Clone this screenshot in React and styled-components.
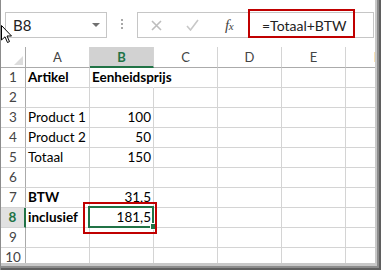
import React from 'react';
import styled, { createGlobalStyle, css } from 'styled-components';

const Global = createGlobalStyle`
  html, body { margin: 0; padding: 0; background: #fff; }
  body { font-family: Lato, "Liberation Sans", sans-serif; }
`;

const Frame = styled.div`
  position: relative;
  width: 381px;
  height: 270px;
  box-sizing: border-box;
  border-left: 1px solid #8c8c8c;
  background: #fff;
  overflow: hidden;
  box-shadow: inset -2px -2px 0 #5f5f5f, inset -4px -4px 0 #8c8c8c, inset -6px -7px 0 #c8c8c8;
`;

const Inner = styled.div`
  width: 374px;
  height: 263px;
  overflow: hidden;
  display: flex;
  flex-direction: column;
  background: #fff;
`;

const FormulaBar = styled.div`
  height: 47px;
  flex: none;
  box-sizing: border-box;
  display: flex;
  align-items: flex-start;
  padding: 12px 0 0 4px;
`;

const NameBox = styled.div`
  width: 102px;
  height: 26px;
  box-sizing: border-box;
  border: 1px solid #c6c6c6;
  display: flex;
  align-items: center;
  justify-content: space-between;
  padding: 0 6px 0 7px;
  font-size: 15px;
  color: #222;
`;

const Caret = styled.span`
  width: 0;
  height: 0;
  border-left: 4px solid transparent;
  border-right: 4px solid transparent;
  border-top: 4px solid #707070;
`;

const Dots = styled.div`
  margin: 7px 0 0 14px;
  display: flex;
  flex-direction: column;
  gap: 2px;
  width: 2px;
`;

const Dot = styled.span`
  width: 2px;
  height: 2px;
  background: #a8a8a8;
`;

const FxBox = styled.div`
  margin-left: 14px;
  width: 237px;
  height: 26px;
  box-sizing: border-box;
  border: 1px solid #c6c6c6;
  display: flex;
  align-items: stretch;
`;

const Slot = styled.div`
  width: ${p => p.$w}px;
  flex: none;
  display: flex;
  align-items: center;
  justify-content: center;
`;

const FxText = styled.span`
  font-family: "Liberation Serif", serif;
  font-style: italic;
  font-size: 15px;
  color: #444;
  letter-spacing: -0.5px;
  & small { font-size: 11px; }
`;

const Field = styled.div`
  position: relative;
  flex: 1;
  display: flex;
  align-items: center;
  padding-left: 14px;
  font-size: 14px;
  color: #222;
`;

const Annotation = styled.span`
  position: absolute;
  box-sizing: border-box;
  border: 2px solid #c00000;
  pointer-events: none;
  z-index: 3;
`;

const FieldMark = styled(Annotation)`
  top: -4px;
  left: 0;
  width: 107px;
  height: 29px;
`;

const Sheet = styled.div`
  display: grid;
  grid-template-columns: 25px repeat(6, 64px);
  grid-template-rows: 21px repeat(9, 20px) 16px;
  font-size: 13.5px;
`;

const Corner = styled.div`
  position: relative;
  box-sizing: border-box;
  border-right: 1px solid #ababab;
  border-bottom: 1px solid #ababab;
  &::after {
    content: '';
    position: absolute;
    right: 2px;
    bottom: 2px;
    width: 0;
    height: 0;
    border-left: 9px solid transparent;
    border-bottom: 9px solid #dcdcdc;
  }
`;

const ColHead = styled.div`
  box-sizing: border-box;
  border-right: 1px solid #d4d4d4;
  border-bottom: 1px solid #ababab;
  display: flex;
  align-items: center;
  justify-content: center;
  color: #444;
  font-size: 13px;
  ${p => p.$active && css`
    background: #d2d2d2;
    border-bottom: 2px solid #217346;
    color: #217346;
    font-weight: 700;
  `}
`;

const RowHead = styled.div`
  box-sizing: border-box;
  border-right: 1px solid #ababab;
  border-bottom: 1px solid #d4d4d4;
  display: flex;
  align-items: flex-start;
  justify-content: center;
  padding-top: 1px;
  line-height: 17px;
  color: #444;
  font-size: 13.5px;
  ${p => p.$active && css`
    background: #e1e1e1;
    border-right: 2px solid #217346;
    color: #217346;
    font-weight: 700;
  `}
`;

const Cell = styled.div`
  position: relative;
  box-sizing: border-box;
  border-right: 1px solid ${p => (p.$spill ? 'transparent' : '#d4d4d4')};
  border-bottom: 1px solid #d4d4d4;
  display: flex;
  align-items: flex-start;
  justify-content: ${p => (p.$right ? 'flex-end' : 'flex-start')};
  padding: 1px 2px 0 2px;
  white-space: nowrap;
  overflow: visible;
  color: #000;
  line-height: 17px;
  font-weight: ${p => (p.$bold ? 700 : 400)};
  z-index: ${p => (p.$spill || p.$selected ? 2 : 'auto')};
  ${p => p.$selected && css`
    &::after {
      content: '';
      position: absolute;
      top: -2px;
      left: -2px;
      right: -1px;
      bottom: -1px;
      border: 2px solid #217346;
    }
    &::before {
      content: '';
      position: absolute;
      right: -4px;
      bottom: -3px;
      width: 5px;
      height: 5px;
      background: #217346;
      border: 1px solid #fff;
      z-index: 1;
    }
  `}
`;

const CellMark = styled(Annotation)`
  top: -6px;
  left: -7px;
  right: -4px;
  bottom: -7px;
`;

const Cursor = styled.svg`
  position: absolute;
  left: -1px;
  top: 24px;
  z-index: 5;
`;

const cols = ['A', 'B', 'C', 'D', 'E', 'F'];

const data = [
  [{ t: 'Artikel', b: true }, { t: 'Eenheidsprijs', b: true, spill: true }],
  [],
  [{ t: 'Product 1' }, { t: '100', r: true }],
  [{ t: 'Product 2' }, { t: '50', r: true }],
  [{ t: 'Totaal' }, { t: '150', r: true }],
  [],
  [{ t: 'BTW', b: true }, { t: '31,5', r: true }],
  [{ t: 'inclusief', b: true }, { t: '181,5', r: true, sel: true }],
  [],
  [],
];

export default function App() {
  return (
    <>
      <Global />
      <Frame>
        <Inner>
          <FormulaBar>
            <NameBox>
              <span>B8</span>
              <Caret />
            </NameBox>
            <Dots>
              <Dot />
              <Dot />
              <Dot />
            </Dots>
            <FxBox>
              <Slot $w={36}>
                <svg width="11" height="11" viewBox="0 0 11 11">
                  <path d="M1 1 L10 10 M10 1 L1 10" stroke="#bdbdbd" strokeWidth="1.6" fill="none" />
                </svg>
              </Slot>
              <Slot $w={36}>
                <svg width="13" height="12" viewBox="0 0 13 12">
                  <path d="M1 7 L4.5 11 L12 1" stroke="#c8c8c8" strokeWidth="1.6" fill="none" />
                </svg>
              </Slot>
              <Slot $w={38}>
                <FxText>f<small>x</small></FxText>
              </Slot>
              <Field>
                =Totaal+BTW
                <FieldMark />
              </Field>
            </FxBox>
          </FormulaBar>
          <Sheet>
            <Corner />
            {cols.map(c => (
              <ColHead key={c} $active={c === 'B'}>{c}</ColHead>
            ))}
            {data.map((row, i) => (
              <React.Fragment key={i}>
                <RowHead $active={i === 7}>{i + 1}</RowHead>
                {cols.map((c, j) => {
                  const d = row[j];
                  return (
                    <Cell
                      key={c}
                      $bold={d && d.b}
                      $right={d && d.r}
                      $spill={d && d.spill}
                      $selected={d && d.sel}
                    >
                      {d ? d.t : ''}
                      {d && d.sel && <CellMark />}
                    </Cell>
                  );
                })}
              </React.Fragment>
            ))}
          </Sheet>
        </Inner>
        <Cursor width="13" height="21" viewBox="0 0 13 21">
          <path d="M1.5 1.5 L1.5 16 L5 12.8 L7.5 18.5 L9.5 17.6 L7 12 L11.5 12 Z" fill="#fff" stroke="#000" strokeWidth="1" strokeLinejoin="round" />
        </Cursor>
      </Frame>
    </>
  );
}
